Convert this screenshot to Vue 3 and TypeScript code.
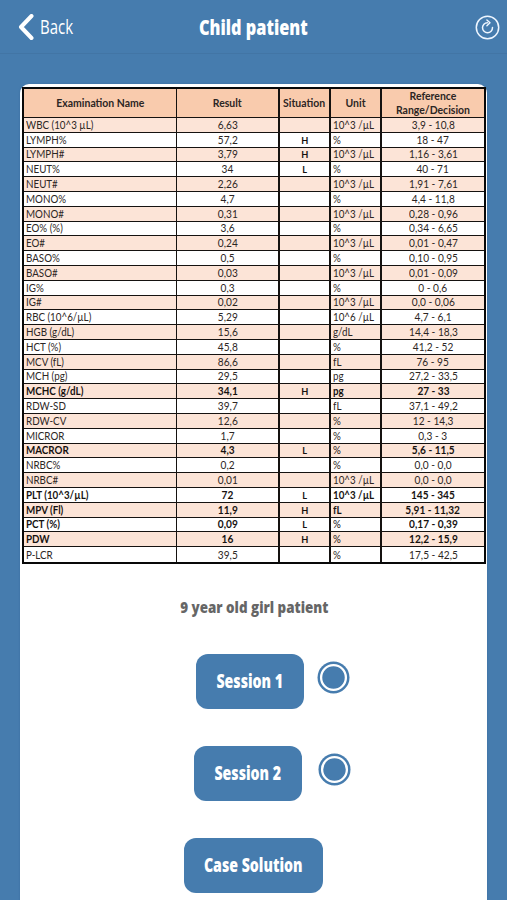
<script setup lang="ts">
interface Row {
  name: string
  result: string
  situation: string
  unit: string
  range: string
  bold: boolean
}

const K = '10^3 /µL'

function row(name: string, result: string, situation: string, unit: string, range: string, bold = false): Row {
  return { name, result, situation, unit, range, bold }
}

const rows: Row[] = [
  row('WBC (10^3 µL)', '6,63', '', K, '3,9 - 10,8'),
  row('LYMPH%', '57,2', 'H', '%', '18 - 47'),
  row('LYMPH#', '3,79', 'H', K, '1,16 - 3,61'),
  row('NEUT%', '34', 'L', '%', '40 - 71'),
  row('NEUT#', '2,26', '', K, '1,91 - 7,61'),
  row('MONO%', '4,7', '', '%', '4,4 - 11,8'),
  row('MONO#', '0,31', '', K, '0,28 - 0,96'),
  row('EO% (%)', '3,6', '', '%', '0,34 - 6,65'),
  row('EO#', '0,24', '', K, '0,01 - 0,47'),
  row('BASO%', '0,5', '', '%', '0,10 - 0,95'),
  row('BASO#', '0,03', '', K, '0,01 - 0,09'),
  row('IG%', '0,3', '', '%', '0 - 0,6'),
  row('IG#', '0,02', '', K, '0,0 - 0,06'),
  row('RBC (10^6/µL)', '5,29', '', '10^6 /µL', '4,7 - 6,1'),
  row('HGB (g/dL)', '15,6', '', 'g/dL', '14,4 - 18,3'),
  row('HCT (%)', '45,8', '', '%', '41,2 - 52'),
  row('MCV (fL)', '86,6', '', 'fL', '76 - 95'),
  row('MCH (pg)', '29,5', '', 'pg', '27,2 - 33,5'),
  row('MCHC (g/dL)', '34,1', 'H', 'pg', '27 - 33', true),
  row('RDW-SD', '39,7', '', 'fL', '37,1 - 49,2'),
  row('RDW-CV', '12,6', '', '%', '12 - 14,3'),
  row('MICROR', '1,7', '', '%', '0,3 - 3'),
  row('MACROR', '4,3', 'L', '%', '5,6 - 11,5', true),
  row('NRBC%', '0,2', '', '%', '0,0 - 0,0'),
  row('NRBC#', '0,01', '', K, '0,0 - 0,0'),
  row('PLT (10^3/µL)', '72', 'L', K, '145 - 345', true),
  row('MPV (Fl)', '11,9', 'H', 'fL', '5,91 - 11,32', true),
  row('PCT (%)', '0,09', 'L', '%', '0,17 - 0,39', true),
  row('PDW', '16', 'H', '%', '12,2 - 15,9', true),
  row('P-LCR', '39,5', '', '%', '17,5 - 42,5'),
]
</script>

<template>
  <div class="screen">
    <header class="bar">
      <button class="back">
        <svg width="16" height="26" viewBox="0 0 16 26"><path d="M13.5 2 L3 13 L13.5 24" fill="none" stroke="#fff" stroke-width="4" stroke-linecap="round" stroke-linejoin="round" /></svg>
        <span class="back-text">Back</span>
      </button>
      <h1 class="title"><span>Child patient</span></h1>
      <button class="reload">
        <svg width="25" height="25" viewBox="0 0 25 25" fill="none" stroke="#eef6ff">
          <circle cx="12.5" cy="12.5" r="11.2" stroke-width="1.5" />
          <path d="M12.4 7.7 A5 5 0 1 0 17.5 12.6" stroke-width="1.5" stroke-linecap="round" />
          <path d="M11.9 4.9 L15 7.8 L11.9 10.7" stroke-width="1.4" stroke-linecap="round" stroke-linejoin="round" />
        </svg>
      </button>
    </header>

    <main class="card">
      <section class="sheet">
        <div class="line head">
          <div><span>Examination Name</span></div>
          <div><span>Result</span></div>
          <div><span>Situation</span></div>
          <div><span>Unit</span></div>
          <div><span>Reference<br />Range/Decision</span></div>
        </div>
        <div class="body">
          <div v-for="r in rows" :key="r.name" class="line" :class="{ bold: r.bold }">
            <div class="left"><span>{{ r.name }}</span></div>
            <div><span>{{ r.result }}</span></div>
            <div class="sit"><span>{{ r.situation }}</span></div>
            <div class="left" :class="{ thin: r.unit === '%' }"><span>{{ r.unit }}</span></div>
            <div><span>{{ r.range }}</span></div>
          </div>
        </div>
      </section>

      <p class="caption"><span>9 year old girl patient</span></p>

      <div class="actions">
        <div class="action first">
          <button class="btn"><span>Session 1</span></button>
          <svg class="radio" width="33" height="33" viewBox="0 0 33 33">
            <circle cx="16.5" cy="16.5" r="16" fill="#467cae" />
            <circle cx="16.5" cy="16.5" r="12.4" fill="#467cae" stroke="#fff" stroke-width="2.3" />
          </svg>
        </div>
        <div class="action second">
          <button class="btn"><span>Session 2</span></button>
          <svg class="radio" width="33" height="33" viewBox="0 0 33 33">
            <circle cx="16.5" cy="16.5" r="16" fill="#467cae" />
            <circle cx="16.5" cy="16.5" r="12.4" fill="#467cae" stroke="#fff" stroke-width="2.3" />
          </svg>
        </div>
        <div class="action third">
          <button class="btn wide"><span>Case Solution</span></button>
        </div>
      </div>
    </main>
  </div>
</template>

<style>
body {
  background: #467cae;
  overflow: hidden;
}
</style>

<style scoped>
* {
  box-sizing: border-box;
}
.screen {
  width: 507px;
  height: 900px;
  overflow: hidden;
  background: #467cae;
  font-family: 'Open Sans', 'Noto Sans', sans-serif;
}
button {
  border: 0;
  padding: 0;
  margin: 0;
  background: none;
  font: inherit;
  color: #fff;
}
span {
  display: inline-block;
  white-space: nowrap;
}
.bar {
  display: grid;
  grid-template-columns: 120px 1fr 120px;
  align-items: center;
  height: 54px;
  border-bottom: 1px solid #4275a5;
}
.back {
  display: flex;
  align-items: center;
  gap: 6px;
  padding-left: 18px;
  height: 54px;
}
.back-text {
  font-size: 20.5px;
  font-weight: 400;
  line-height: 24px;
  padding-bottom: 2px;
  transform: scaleX(0.73);
  transform-origin: left;
}
.title {
  margin: 0;
  text-align: center;
  font-size: 20.5px;
  font-weight: 800;
  line-height: 52px;
  color: #fff;
}
.title span {
  transform: scaleX(0.795);
}
.reload {
  display: flex;
  justify-content: flex-end;
  padding-right: 7px;
}
.card {
  width: 467px;
  height: 830px;
  margin: 30px 0 0 20px;
  padding: 3px 0 0 2px;
  background: #fff;
  border-radius: 9px 9px 0 0;
  box-shadow: 0 0 2px #3a6c9c;
}
.sheet {
  width: 464px;
  height: 477px;
  border: 2px solid #080808;
  font-family: Lato, 'Open Sans', sans-serif;
  font-size: 11px;
  line-height: 12px;
  color: #2c2624;
}
.line {
  display: grid;
  grid-template-columns: 153px 103px 51px 51px 1fr;
}
.line > div {
  display: flex;
  justify-content: center;
  align-items: center;
  border-right: 1px solid #151210;
  border-bottom: 1px solid #151210;
  min-height: 0;
  min-width: 0;
  text-align: center;
}
.line > div:nth-child(2),
.line > div:nth-child(3),
.line > div:nth-child(4) {
  border-right-width: 2px;
}
.line > div:last-child {
  border-right: 0;
}
.line span {
  transform: scaleX(0.92);
}
.head {
  height: 29px;
  background: #f9cbad;
  font-weight: 700;
  line-height: 14.5px;
}
.line.head span {
  transform: scaleX(0.95);
}
.body {
  display: grid;
  grid-template-rows: repeat(30, minmax(0, 1fr));
  height: 444px;
}
.body .line:nth-child(odd) {
  background: #fce4d7;
}
.body .line:last-child > div {
  border-bottom: 0;
}
.line > .left {
  justify-content: flex-start;
  padding-left: 2px;
}
.line > .left span {
  transform: scaleX(0.89);
  transform-origin: left;
}
.sit,
.bold {
  font-weight: 700;
  color: #161210;
}
.sit {
  font-size: 10px;
}
.thin {
  font-weight: 400;
}
.caption {
  margin: 32px 0 0;
  padding-right: 1px;
  text-align: center;
  font-size: 16.5px;
  line-height: 22px;
  font-weight: 800;
  color: #666;
}
.caption span {
  transform: scaleX(0.812);
}
.actions {
  display: flex;
  flex-direction: column;
  gap: 37px;
  margin-top: 36px;
}
.action {
  display: flex;
  height: 55px;
  align-items: flex-start;
  gap: 13px;
}
.first {
  padding-left: 174px;
}
.second {
  padding-left: 172px;
  gap: 16px;
}
.third {
  padding-left: 162px;
}
.radio {
  margin-top: 7px;
}
.btn {
  width: 108px;
  height: 55px;
  border-radius: 12px;
  background: #467cae;
  font-size: 19px;
  font-weight: 800;
  display: flex;
  justify-content: center;
  align-items: center;
  padding-bottom: 1px;
}
.wide {
  width: 139px;
}
.btn span {
  transform: scaleX(0.745);
}
</style>
